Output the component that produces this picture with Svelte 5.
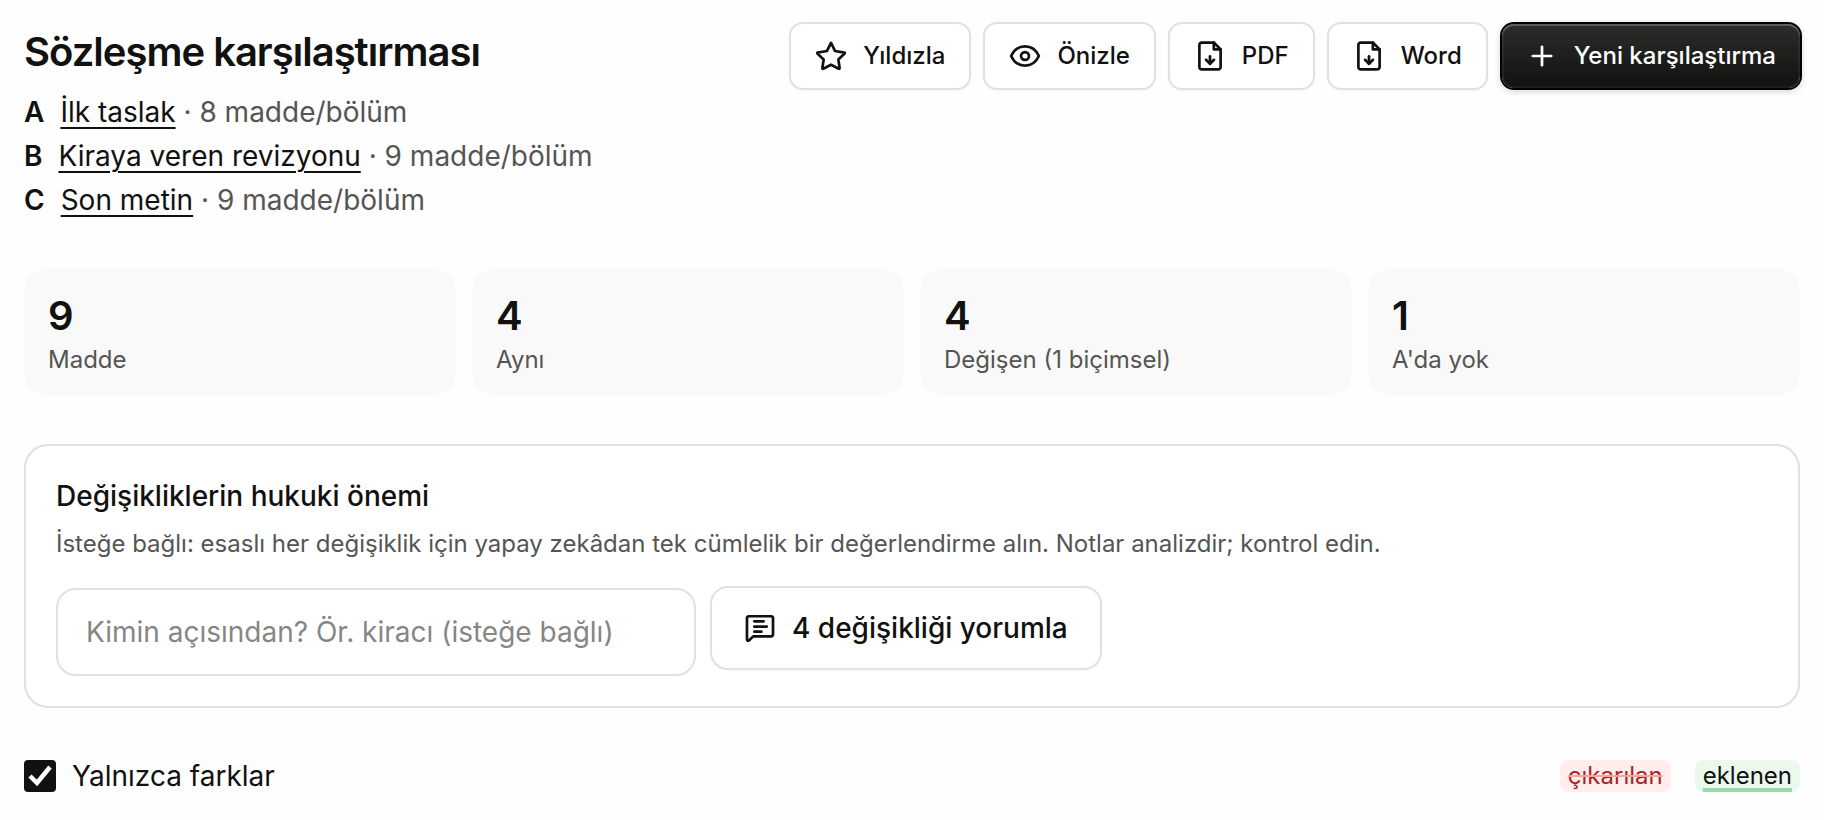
<script>
  let perspective = $state("");
  let onlyDiffs = $state(true);

  const versions = [
    { key: "A", name: "İlk taslak", clauses: 8 },
    { key: "B", name: "Kiraya veren revizyonu", clauses: 9 },
    { key: "C", name: "Son metin", clauses: 9 },
  ];

  const stats = [
    { value: 9, label: "Madde" },
    { value: 4, label: "Aynı" },
    { value: 4, label: "Değişen (1 biçimsel)" },
    { value: 1, label: "A'da yok" },
  ];

  const icons = {
    star: ["M12 2.800l2.900 5.700 6.500 1.100q.6.2.2.7l-4.400 4.200.9 6q0 .7-.6.500L12 18.200 6.500 21q-.6.2-.6-.5l.9-6-4.400-4.200q-.4-.5.2-.7l6.500-1.100z"],
    eye: ["M2.200 12C4.200 7.600 7.800 5.200 12 5.200s7.800 2.400 9.800 6.800c-2 4.400-5.600 6.800-9.800 6.800S4.200 16.400 2.200 12z", "M12 9.200a2.800 2.800 0 1 0 0 5.600 2.800 2.800 0 0 0 0-5.600z"],
    file: ["M14.700 2.500H6.200a1.700 1.700 0 0 0-1.700 1.700v15.600a1.700 1.700 0 0 0 1.700 1.700h11.600a1.700 1.700 0 0 0 1.700-1.700V7.300z", "M14.700 2.500v4.800h4.800", "M12 12.200v5.300", "M9.200 14.700l2.800 2.800 2.800-2.800"],
    plus: ["M12 5.500v13", "M5.500 12h13"],
    comment: ["M4.300 3.700h15.400a1.500 1.500 0 0 1 1.500 1.500v11.200a1.500 1.500 0 0 1-1.500 1.500H7.200l-3 2.900q-1.400.7-1.400-.8V5.200a1.500 1.500 0 0 1 1.500-1.500z", "M8 7.300h6.500", "M8 11h8.800", "M8 14.600h5"],
  };

  const actions = [
    { label: "Yıldızla", icon: "star" },
    { label: "Önizle", icon: "eye" },
    { label: "PDF", icon: "file" },
    { label: "Word", icon: "file" },
    { label: "Yeni karşılaştırma", icon: "plus", primary: true },
  ];
</script>

{#snippet icon(name)}
  <svg class="icon" viewBox="0.7 0.7 22.6 22.6" aria-hidden="true">
    {#each icons[name] as d}
      <path {d} />
    {/each}
  </svg>
{/snippet}

<main class="page">
  <header class="head">
    <div class="intro">
      <h1>Sözleşme karşılaştırması</h1>
      <ul class="versions">
        {#each versions as v}
          <li><strong>{v.key}</strong><a href="#{v.key}">{v.name}</a> · {v.clauses} madde/bölüm</li>
        {/each}
      </ul>
    </div>
    <div class="actions">
      {#each actions as a}
        <button type="button" class="btn" class:primary={a.primary}>
          {@render icon(a.icon)}
          {a.label}
        </button>
      {/each}
    </div>
  </header>

  <dl class="stats">
    {#each stats as s}
      <div class="stat">
        <dt>{s.label}</dt>
        <dd>{s.value}</dd>
      </div>
    {/each}
  </dl>

  <section class="panel">
    <h2>Değişikliklerin hukuki önemi</h2>
    <p>İsteğe bağlı: esaslı her değişiklik için yapay zekâdan tek cümlelik bir değerlendirme alın. Notlar analizdir; kontrol edin.</p>
    <form class="ask" onsubmit={(e) => e.preventDefault()}>
      <input
        type="text"
        class="field"
        aria-label="Kimin açısından?"
        placeholder="Kimin açısından? Ör. kiracı (isteğe bağlı)"
        bind:value={perspective}
      />
      <button type="submit" class="btn large">
        {@render icon("comment")}
        4 değişikliği yorumla
      </button>
    </form>
  </section>

  <footer class="filter">
    <label class="toggle">
      <input type="checkbox" bind:checked={onlyDiffs} />
      Yalnızca farklar
    </label>
    <div class="legend">
      <del>çıkarılan</del>
      <ins>eklenen</ins>
    </div>
  </footer>
</main>

<style>
  :global(body) {
    background: #fefefe;
  }
  .page {
    --ink: #111110;
    --muted: #555553;
    --line: #e1e1e0;
    padding: 22px 24px 24px;
    font-family: Inter, "Liberation Sans", sans-serif;
    font-size: 28px;
    line-height: 44px;
    color: var(--ink);
  }
  h1, h2, p, ul, dl, dd {
    margin: 0;
    padding: 0;
  }
  .head {
    display: flex;
    justify-content: space-between;
    align-items: flex-start;
  }
  h1 {
    font-size: 40px;
    font-weight: 600;
    line-height: 60px;
    letter-spacing: -1px;
    margin-bottom: 8px;
  }
  .versions {
    list-style: none;
    color: var(--muted);
  }
  .versions strong {
    font-weight: 600;
    color: var(--ink);
    margin-right: 16px;
  }
  .versions a {
    color: var(--ink);
    text-decoration-thickness: 2px;
    text-underline-offset: 5px;
  }
  .actions {
    display: flex;
    gap: 12px;
    margin-right: -2px;
  }
  .btn {
    display: inline-flex;
    align-items: center;
    gap: 16px;
    padding: 16px 24px;
    border: 2px solid var(--line);
    border-radius: 14px;
    background: #fff;
    color: var(--ink);
    font: 500 24px/32px Inter, "Liberation Sans", sans-serif;
    white-space: nowrap;
    box-shadow: 0 1px 2px rgba(0, 0, 0, 0.03);
  }
  .primary {
    border-color: #000;
    background: linear-gradient(#2c2c2b, #111110) padding-box;
    color: #fff;
    box-shadow: inset 0 2px 0 rgba(255, 255, 255, 0.2), inset 0 0 0 2px rgba(255, 255, 255, 0.05), 0 2px 6px rgba(0, 0, 0, 0.15);
  }
  .large {
    padding: 20px 32px;
    border-radius: 18px;
    font-size: 28px;
    line-height: 40px;
  }
  .icon {
    width: 32px;
    height: 32px;
    flex-shrink: 0;
    fill: none;
    stroke: currentColor;
    stroke-width: 1.9;
    stroke-linecap: round;
    stroke-linejoin: round;
  }
  .stats {
    display: grid;
    grid-template-columns: repeat(4, 1fr);
    gap: 16px;
    margin-top: 46px;
  }
  .stat {
    display: flex;
    flex-direction: column-reverse;
    padding: 20px 24px;
    border-radius: 24px;
    background: #f9f9f9;
  }
  .stat dd {
    font-size: 40px;
    font-weight: 600;
    line-height: 56px;
  }
  .stat dt {
    font-size: 24px;
    line-height: 32px;
    color: var(--muted);
  }
  .panel {
    margin-top: 48px;
    padding: 28px 30px 30px;
    border: 2px solid var(--line);
    border-radius: 24px;
    background: #fff;
  }
  h2 {
    font-size: 28px;
    font-weight: 500;
    line-height: 44px;
    margin-bottom: 8px;
  }
  .panel p {
    font-size: 24px;
    line-height: 36px;
    color: var(--muted);
  }
  .ask {
    display: flex;
    align-items: flex-start;
    gap: 14px;
    margin-top: 24px;
  }
  .field {
    box-sizing: border-box;
    width: 640px;
    height: 88px;
    margin-top: 2px;
    padding: 0 28px;
    border: 2px solid var(--line);
    border-radius: 20px;
    background: #fff;
    color: var(--ink);
    font: inherit;
  }
  .field::placeholder {
    color: #868685;
    opacity: 1;
  }
  .filter {
    display: flex;
    justify-content: space-between;
    align-items: center;
    margin-top: 46px;
  }
  .toggle {
    display: flex;
    align-items: center;
    gap: 16px;
  }
  .toggle input {
    appearance: none;
    width: 32px;
    height: 32px;
    margin: 0;
    border: 2px solid var(--ink);
    border-radius: 4px;
  }
  .toggle input:checked {
    background: var(--ink) url("data:image/svg+xml,%3Csvg xmlns='http://www.w3.org/2000/svg' viewBox='0 0 28 28'%3E%3Cpath d='M4 14l7 7L24 5' fill='none' stroke='white' stroke-width='4.500'/%3E%3C/svg%3E") center / 28px 28px no-repeat;
  }
  .legend {
    display: flex;
    gap: 24px;
    font-size: 24px;
    line-height: 32px;
  }
  .legend del,
  .legend ins {
    padding: 0 8px;
    border-radius: 8px;
  }
  .legend del {
    background: #ffeeed;
    color: #a82625;
    text-decoration: line-through 2px #f5a39b;
  }
  .legend ins {
    background: #eaf8ee;
    text-decoration: underline 4px #9bd8aa;
    text-underline-offset: 4px;
  }
</style>
